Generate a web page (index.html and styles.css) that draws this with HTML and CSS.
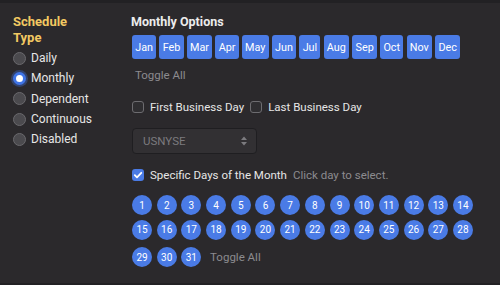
FILE: index.html
```html
<!DOCTYPE html>
<html lang="en">
	<head>
		<meta charset="UTF-8" />
		<meta name="viewport" content="width=device-width, initial-scale=1.0" />
		<title>Schedule Type</title>
		<link rel="stylesheet" href="styles.css">
	</head>
	<body>
		<div class="panel">
			<div class="type-col">
				<h3 class="type-title">Schedule Type</h3>
				<label class="radio-row"><span class="radio"></span>Daily</label>
				<label class="radio-row"><span class="radio checked"></span>Monthly</label>
				<label class="radio-row"><span class="radio"></span>Dependent</label>
				<label class="radio-row"><span class="radio"></span>Continuous</label>
				<label class="radio-row"><span class="radio"></span>Disabled</label>
			</div>

			<div class="options-col">
				<h3 class="options-title">Monthly Options</h3>
				<div class="months">
					<button class="month">Jan</button>
					<button class="month">Feb</button>
					<button class="month">Mar</button>
					<button class="month">Apr</button>
					<button class="month">May</button>
					<button class="month">Jun</button>
					<button class="month">Jul</button>
					<button class="month">Aug</button>
					<button class="month">Sep</button>
					<button class="month">Oct</button>
					<button class="month">Nov</button>
					<button class="month">Dec</button>
				</div>
				<div class="toggle-link months-toggle">Toggle All</div>

				<div class="check-row business-row">
					<label class="check-label"><span class="check"></span>First Business Day</label>
					<label class="check-label"><span class="check"></span>Last Business Day</label>
				</div>

				<div class="select-box">
					<span>USNYSE</span>
					<svg width="8" height="12" viewBox="0 0 8 12">
						<path d="M4 1.5L7 5H1z" fill="currentColor" />
						<path d="M4 10.5L7 7H1z" fill="currentColor" />
					</svg>
				</div>

				<div class="check-row specific-row">
					<label class="check-label">
						<span class="check checked">
							<svg width="10" height="10" viewBox="0 0 10 10">
								<path d="M1.8 5.2l2.2 2.2 4.3-4.6" fill="none" stroke="#fff" stroke-width="1.8" stroke-linecap="round" stroke-linejoin="round" />
							</svg>
						</span>
						Specific Days of the Month
					</label>
					<span class="hint">Click day to select.</span>
				</div>

				<div class="days">
					<div class="day-row">
						<button class="day">1</button>
						<button class="day">2</button>
						<button class="day">3</button>
						<button class="day">4</button>
						<button class="day">5</button>
						<button class="day">6</button>
						<button class="day">7</button>
						<button class="day">8</button>
						<button class="day">9</button>
						<button class="day">10</button>
						<button class="day">11</button>
						<button class="day">12</button>
						<button class="day">13</button>
						<button class="day">14</button>
					</div>
					<div class="day-row">
						<button class="day">15</button>
						<button class="day">16</button>
						<button class="day">17</button>
						<button class="day">18</button>
						<button class="day">19</button>
						<button class="day">20</button>
						<button class="day">21</button>
						<button class="day">22</button>
						<button class="day">23</button>
						<button class="day">24</button>
						<button class="day">25</button>
						<button class="day">26</button>
						<button class="day">27</button>
						<button class="day">28</button>
					</div>
					<div class="day-row last-row">
						<button class="day">29</button>
						<button class="day">30</button>
						<button class="day">31</button>
						<span class="toggle-link days-toggle">Toggle All</span>
					</div>
				</div>
			</div>
		</div>
	</body>
</html>
```

FILE: styles.css
```css
* {
	margin: 0;
	padding: 0;
	box-sizing: border-box;
	font-family: Roboto, "Noto Sans", sans-serif;
}
body {
	background-color: #222124;
	width: 500px;
	height: 285px;
	overflow: hidden;
}
.panel {
	display: flex;
	margin-top: 3px;
	height: 280px;
	background-color: #2b292c;
	color: #e6e6e6;
}
.type-col {
	width: 131px;
	padding: 11px 0 0 13px;
}
.type-title {
	width: 70px;
	font-size: 13px;
	line-height: 16px;
	font-weight: 700;
	color: #f2c862;
	margin-bottom: 2px;
}
.radio-row {
	display: flex;
	align-items: center;
	gap: 5px;
	height: 20.3px;
	font-size: 12px;
}
.radio {
	width: 13px;
	height: 13px;
	border-radius: 50%;
	background-color: #4b4a4e;
	border: 1px solid #6a696d;
}
.radio.checked {
	background-color: #fff;
	border: 3.5px solid #3f74e6;
	box-shadow: 0 0 0 2px rgba(63, 116, 230, 0.35);
}
.options-col {
	flex: 1;
	padding-top: 11px;
}
.options-title {
	font-size: 12.5px;
	line-height: 16px;
	font-weight: 700;
	color: #ececec;
}
.months {
	display: flex;
	gap: 3.3px;
	margin-top: 5px;
	margin-left: 1px;
}
.month {
	height: 24px;
	padding: 0 3.2px;
	border: none;
	border-radius: 3px;
	background-color: #4a7be6;
	color: #fff;
	font-size: 10.8px;
}
.toggle-link {
	color: #8c8b8f;
	font-size: 11.5px;
}
.months-toggle {
	margin: 8px 0 0 4px;
	line-height: 16px;
}
.check-row {
	display: flex;
	align-items: center;
	gap: 6px;
	line-height: 16px;
	font-size: 11.5px;
}
.business-row {
	margin-top: 16px;
	margin-left: 1px;
}
.check-label {
	display: flex;
	align-items: center;
	gap: 6px;
}
.check {
	display: flex;
	align-items: center;
	justify-content: center;
	width: 12px;
	height: 12px;
	border-radius: 3px;
	border: 1px solid #6d6c70;
	background-color: #2f2e31;
}
.check.checked {
	border: none;
	background-color: #4a7be6;
}
.select-box {
	display: flex;
	align-items: center;
	justify-content: space-between;
	width: 125px;
	height: 26px;
	margin: 13px 0 0 1px;
	padding: 0 8px 0 10px;
	border: 1px solid #1f1e21;
	border-radius: 4px;
	background-color: #323033;
	color: #7c7b7f;
	font-size: 11.5px;
}
.specific-row {
	margin-top: 13px;
	margin-left: 1px;
}
.hint {
	color: #8c8b8f;
}
.days {
	margin-top: 12px;
	margin-left: 1px;
}
.day-row {
	display: flex;
	align-items: center;
	gap: 4.7px;
	margin-bottom: 4.6px;
}
.last-row {
	margin-top: 7.5px;
}
.day {
	width: 20px;
	height: 20px;
	border: none;
	border-radius: 50%;
	background-color: #4a7be6;
	color: #fff;
	font-size: 10px;
}
.days-toggle {
	margin-left: 4px;
}
```
